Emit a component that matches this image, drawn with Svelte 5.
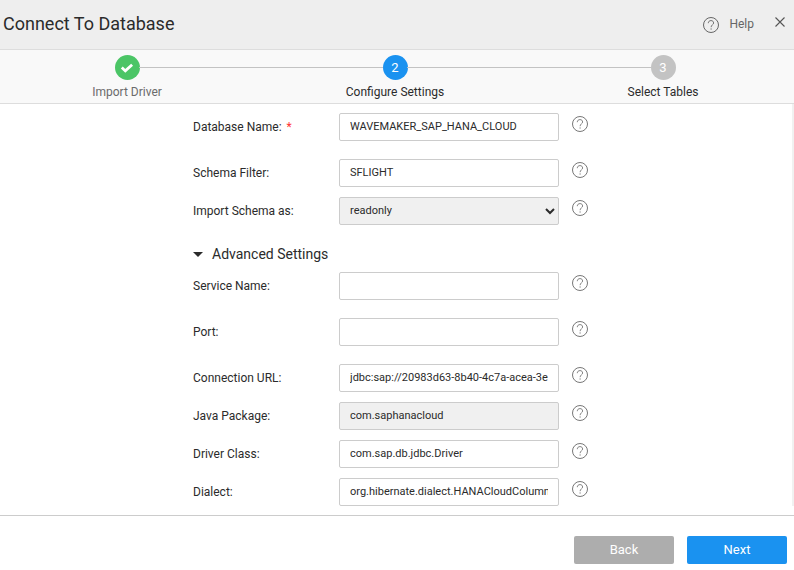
<script>
  const basic = [
    { id: 'name', label: 'Database Name:', value: 'WAVEMAKER_SAP_HANA_CLOUD', required: true, roomy: true },
    { id: 'filter', label: 'Schema Filter:', value: 'SFLIGHT' },
    { id: 'mode', label: 'Import Schema as:', options: ['readonly', 'editable'] }
  ];
  const advanced = [
    { id: 'service', label: 'Service Name:', value: '', roomy: true },
    { id: 'port', label: 'Port:', value: '', roomy: true },
    { id: 'url', label: 'Connection URL:', value: 'jdbc:sap://20983d63-8b40-4c7a-acea-3e5d' },
    { id: 'package', label: 'Java Package:', value: 'com.saphanacloud', readonly: true },
    { id: 'driver', label: 'Driver Class:', value: 'com.sap.db.jdbc.Driver' },
    { id: 'dialect', label: 'Dialect:', value: 'org.hibernate.dialect.HANACloudColumnStoreDialect' }
  ];
  let open = $state(true);
</script>

{#snippet helpIcon()}
  <svg class="help-icon" viewBox="0 0 16 16" width="16" height="16" fill="none" stroke="currentColor" aria-hidden="true">
    <circle cx="8" cy="8" r="7.5" stroke-width="1" />
    <path d="M5.3 6.2C5.3 4.5 6.4 3.6 8 3.6s2.6.9 2.6 2.4C10.6 7.8 8.1 7.9 8.1 10.2" stroke-width=".9" />
    <path d="M8.1 11.4v1.2" stroke-width="1" />
  </svg>
{/snippet}

{#snippet field(f)}
  <div class="row" class:roomy={f.roomy}>
    <label for={f.id}>{f.label}{#if f.required}<span class="required">*</span>{/if}</label>
    {#if f.options}
      <select id={f.id}>
        {#each f.options as option}<option>{option}</option>{/each}
      </select>
    {:else}
      <input id={f.id} type="text" value={f.value} readonly={f.readonly} required={f.required} />
    {/if}
    <button class="icon-button" type="button" aria-label="Help for {f.label}">{@render helpIcon()}</button>
  </div>
{/snippet}

<div class="dialog">
  <header>
    <h1>Connect To Database</h1>
    <a class="help" href="#help">{@render helpIcon()}<span>Help</span></a>
    <button class="icon-button close" type="button" aria-label="Close">
      <svg viewBox="0 0 10 10" width="10" height="10" stroke="currentColor" stroke-width="1.1" aria-hidden="true">
        <path d="M.5 .5l9 9M9.5 .5l-9 9" />
      </svg>
    </button>
  </header>

  <ol class="steps">
    <li class="done">
      <span class="dot">
        <svg viewBox="0 0 14 10" width="14" height="10" fill="none" stroke="currentColor" stroke-width="2.8" aria-hidden="true">
          <path d="M1.8 4.6l3.5 3.3 6.8-6.2" />
        </svg>
      </span>
      <span>Import Driver</span>
    </li>
    <li class="line" aria-hidden="true"></li>
    <li class="current" aria-current="step"><span class="dot">2</span><span>Configure Settings</span></li>
    <li class="line" aria-hidden="true"></li>
    <li><span class="dot">3</span><span>Select Tables</span></li>
  </ol>

  <main>
    <form id="settings">
      {#each basic as f (f.id)}{@render field(f)}{/each}
      <button class="toggle" type="button" aria-expanded={open} onclick={() => (open = !open)}>
        <span class="caret" class:closed={!open}></span>Advanced Settings
      </button>
      {#if open}
        {#each advanced as f (f.id)}{@render field(f)}{/each}
      {/if}
    </form>
  </main>

  <footer>
    <button type="button" class="back">Back</button>
    <button type="submit" form="settings" class="next">Next</button>
  </footer>
</div>

<style>
  :global(body) { background: #fff; }
  .dialog {
    font: 12px/16px Roboto, sans-serif;
    color: #2b2b2b;
  }
  button, input, select { font-family: inherit; }
  header {
    display: flex;
    align-items: center;
    height: 49px;
    padding: 0 9px 0 3px;
    background: #eee;
    border-bottom: 1px solid #ddd;
  }
  h1 {
    flex: 1;
    margin: 0;
    padding-bottom: 2px;
    font-size: 18px;
    line-height: 24px;
    font-weight: 400;
  }
  .help {
    display: flex;
    align-items: center;
    gap: 10px;
    color: #666;
    text-decoration: none;
  }
  .help span { padding-bottom: 2px; }
  .icon-button {
    display: flex;
    padding: 0;
    border: 0;
    background: none;
    color: #777;
    cursor: pointer;
  }
  .close { margin: 0 0 6px 21px; color: #555; }
  .help-icon { display: block; }
  .steps {
    display: flex;
    margin: 0;
    padding: 5px 67px 3px 63px;
    list-style: none;
    background: #f9f9f9;
    border-bottom: 1px solid #ddd;
  }
  .steps li:not(.line) {
    display: flex;
    flex-direction: column;
    align-items: center;
    gap: 4px;
    width: 128px;
  }
  .steps .line {
    flex: 1;
    height: 1px;
    margin: 12px -52px 0;
    background: #c3c3c3;
  }
  .dot {
    display: flex;
    align-items: center;
    justify-content: center;
    width: 25px;
    height: 25px;
    border-radius: 50%;
    background: #c3c3c3;
    color: #fff;
    font-size: 13px;
  }
  .done { color: #6b6b6b; }
  .done .dot { background: #4bc566; }
  .current .dot { background: #1a92f0; }
  main {
    padding: 9px 0 0;
    margin-bottom: 9px;
    border-right: 2px solid #f1f1f1;
  }
  form {
    width: 406px;
    margin: 0 auto;
  }
  .row {
    display: flex;
    align-items: center;
    margin-bottom: 10px;
  }
  .row:last-child { margin-bottom: 0; }
  .row.roomy { margin-bottom: 18px; }
  label { width: 146px; }
  .required { margin-left: 5px; color: #f33; }
  input, select {
    box-sizing: border-box;
    width: 220px;
    height: 28px;
    padding: 0 10px 2px;
    border: 1px solid #ccc;
    border-radius: 2px;
    background: #fff;
    color: #2b2b2b;
    font-size: 11px;
  }
  select { padding: 0 0 2px 6px; }
  select, input:read-only { background: #f0f0f0; }
  .row .icon-button { margin: 0 0 6px 13px; }
  .toggle {
    display: flex;
    align-items: center;
    gap: 9px;
    margin: 19px 0 8px;
    padding: 0;
    border: 0;
    background: none;
    color: inherit;
    font-size: 14px;
    line-height: 20px;
    cursor: pointer;
  }
  .caret {
    border: 5px solid transparent;
    border-top-color: currentColor;
    border-bottom: 0;
  }
  .caret.closed { transform: rotate(-90deg); }
  footer {
    display: flex;
    justify-content: flex-end;
    gap: 13px;
    padding: 20px 7px 6px;
    border-top: 1px solid #ccc;
  }
  footer button {
    width: 100px;
    height: 28px;
    padding: 0 0 2px;
    border: 0;
    border-radius: 2px;
    color: #fff;
    font-size: 13px;
  }
  .back { background: #adadad; }
  .next { background: #1a92f0; }
</style>
